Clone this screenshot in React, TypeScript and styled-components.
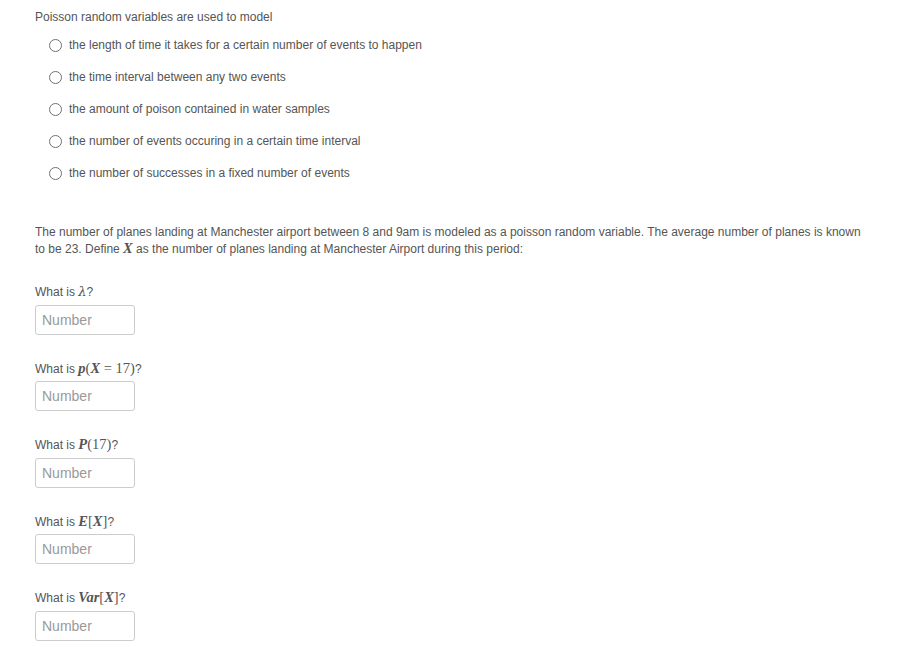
import React from "react";
import styled, { createGlobalStyle } from "styled-components";

const GlobalStyle = createGlobalStyle`
  body {
    margin: 0;
    background: #ffffff;
    font-family: "Liberation Sans", Arial, sans-serif;
  }
`;

const options = [
  "the length of time it takes for a certain number of events to happen",
  "the time interval between any two events",
  "the amount of poison contained in water samples",
  "the number of events occuring in a certain time interval",
  "the number of successes in a fixed number of events",
];

export default function App() {
  return (
    <>
      <GlobalStyle />
      <Page>
        <Prompt>Poisson random variables are used to model</Prompt>
        <OptionList>
          {options.map((o) => (
            <OptionRow key={o}>
              <Radio type="radio" name="poisson" />
              <span>{o}</span>
            </OptionRow>
          ))}
        </OptionList>

        <Paragraph>
          The number of planes landing at Manchester airport between 8 and 9am is modeled as a
          poisson random variable. The average number of planes is known to be 23. Define{" "}
          <MathVar>X</MathVar> as the number of planes landing at Manchester Airport during this
          period:
        </Paragraph>

        <Question>
          <Label>
            What is <Greek>λ</Greek>?
          </Label>
          <NumberInput placeholder="Number" />
        </Question>

        <Question>
          <Label>
            What is <Math>
              <i>p</i>(<i>X</i> = 17)
            </Math>?
          </Label>
          <NumberInput placeholder="Number" />
        </Question>

        <Question>
          <Label>
            What is <Math>
              <i>P</i>(17)
            </Math>?
          </Label>
          <NumberInput placeholder="Number" />
        </Question>

        <Question>
          <Label>
            What is <Math>
              <i>E</i>[<i>X</i>]
            </Math>?
          </Label>
          <NumberInput placeholder="Number" />
        </Question>

        <Question>
          <Label>
            What is <Math>
              <i>Var</i>[<i>X</i>]
            </Math>?
          </Label>
          <NumberInput placeholder="Number" />
        </Question>
      </Page>
    </>
  );
}

const Page = styled.div`
  padding: 9px 35px 0 35px;
  color: #555555;
  font-size: 12px;
`;

const Prompt = styled.div`
  line-height: 17px;
`;

const OptionList = styled.div`
  display: flex;
  flex-direction: column;
  margin: 3.5px 0 0 14px;
`;

const OptionRow = styled.label`
  display: flex;
  align-items: center;
  height: 32px;
  gap: 7px;
  line-height: 17px;
`;

const Radio = styled.input`
  appearance: none;
  margin: 0;
  width: 13px;
  height: 13px;
  border: 1px solid #707070;
  border-radius: 50%;
  background: #fff;
`;

const Paragraph = styled.p`
  margin: 34.5px 0 0 0;
  line-height: 17px;
  max-width: 830px;
`;

const Math = styled.span`
  font-family: "Liberation Serif", "Times New Roman", serif;
  font-size: 14.5px;
  line-height: 1;
  color: #555;
  i {
    font-style: italic;
    font-weight: bold;
  }
`;

const MathVar = styled.i`
  font-family: "Liberation Serif", "Times New Roman", serif;
  font-size: 14.5px;
  line-height: 1;
  font-weight: bold;
`;

const Greek = styled.span`
  font-family: "DejaVu Serif", serif;
  font-size: 13px;
  line-height: 1;
  font-style: italic;
`;

const Question = styled.div`
  display: flex;
  flex-direction: column;
  align-items: flex-start;
  margin-top: 26px;
`;

const Label = styled.div`
  height: 17px;
  line-height: 17px;
`;

const NumberInput = styled.input`
  margin-top: 3.5px;
  box-sizing: border-box;
  width: 100px;
  height: 30px;
  border: 1px solid #cccccc;
  border-radius: 3px;
  padding: 0 6px;
  font-family: "Liberation Sans", Arial, sans-serif;
  font-size: 14px;
  color: #555;
  outline: none;
  &::placeholder {
    color: #999999;
  }
`;
